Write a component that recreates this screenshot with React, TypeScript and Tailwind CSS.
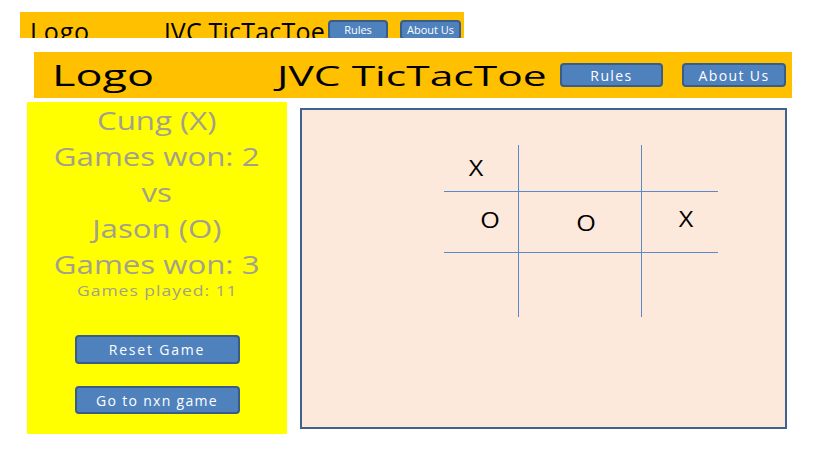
import React from "react"

const font = { fontFamily: '"Open Sans", "Liberation Sans", sans-serif' }

function BlueButton({ label, className }: { label: string; className: string }) {
    return (
        <button
            className={`flex items-center justify-center rounded-[4px] border-2 border-[#385d8a] bg-[#4f81bd] text-white ${className}`}
        >
            {label}
        </button>
    )
}

function Cell({ mark, className }: { mark?: string; className: string }) {
    return (
        <div className={`flex items-center justify-center border-[#5b88c6] ${className}`}>
            {mark && <span className="inline-block scale-x-[1.2] text-[21px] leading-none text-black">{mark}</span>}
        </div>
    )
}

export default function App() {
    const stats = ["Cung (X)", "Games won: 2", "vs", "Jason (O)", "Games won: 3"]

    return (
        <div className="h-[460px] w-[819px] overflow-hidden bg-white" style={font}>
            {/* cropped copy of the header */}
            <div className="ml-[20px] mt-[12px] flex h-[26px] w-[444px] items-start overflow-hidden bg-[#ffc000]">
                <span className="ml-[10px] mt-[7px] text-[25px] leading-none tracking-[0.8px] text-black">Logo</span>
                <span className="ml-[74px] mt-[7px] text-[25px] leading-none tracking-[0.2px] text-black">JVC TicTacToe</span>
                <BlueButton label="Rules" className="ml-auto mt-[8px] h-[20px] w-[60px] text-[11px]" />
                <BlueButton label="About Us" className="ml-[12px] mr-[3px] mt-[8px] h-[20px] w-[61px] text-[11px]" />
            </div>

            {/* header */}
            <div className="ml-[34px] mt-[14px] flex h-[46px] w-[758px] items-center bg-[#ffc000]">
                <span className="ml-[18px] inline-block origin-left scale-x-[1.5] text-[30px] leading-none text-black">Logo</span>
                <span className="ml-[157px] inline-block origin-left scale-x-[1.52] text-[28px] leading-none text-black">
                    JVC TicTacToe
                </span>
                <BlueButton label="Rules" className="ml-auto h-[24px] w-[103px] text-[14px] tracking-[1.4px]" />
                <BlueButton label="About Us" className="ml-[19px] mr-[6px] h-[24px] w-[104px] text-[14px] tracking-[1.4px]" />
            </div>

            <div className="ml-[27px] flex items-start">
                {/* players */}
                <div className="mt-[4px] flex h-[332px] w-[260px] flex-col items-center bg-[#ffff00] text-[#a3a08e]">
                    {stats.map((line) => (
                        <div key={line} className="flex h-[36px] items-center">
                            <span className="inline-block scale-x-[1.2] text-[26px] leading-none">{line}</span>
                        </div>
                    ))}
                    <div className="flex h-[18px] items-center">
                        <span className="inline-block scale-x-[1.25] text-[14px] leading-none tracking-[0.8px]">Games played: 11</span>
                    </div>
                    <BlueButton label="Reset Game" className="mt-[35px] h-[29px] w-[165px] text-[14px] tracking-[1.8px]" />
                    <BlueButton label="Go to nxn game" className="mt-[22px] h-[28px] w-[165px] text-[14px] tracking-[1.3px]" />
                </div>

                {/* board */}
                <div className="ml-[13px] mt-[10px] h-[321px] w-[487px] border-2 border-[#41628f] bg-[#fde9db] pl-[142px] pt-[35px]">
                    <div className="grid grid-cols-[75px_123px_76px] grid-rows-[47px_61px_64px]">
                        <Cell mark="X" className="border-b border-r pr-[10px]" />
                        <Cell className="border-b border-r" />
                        <Cell className="border-b" />
                        <Cell mark="O" className="border-b border-r pl-[19px] pb-[3px]" />
                        <Cell mark="O" className="border-b border-r pl-[13px] pt-[2px]" />
                        <Cell mark="X" className="border-b pl-[12px] pb-[6px]" />
                        <Cell className="border-r" />
                        <Cell className="border-r" />
                        <Cell />
                    </div>
                </div>
            </div>
        </div>
    )
}
